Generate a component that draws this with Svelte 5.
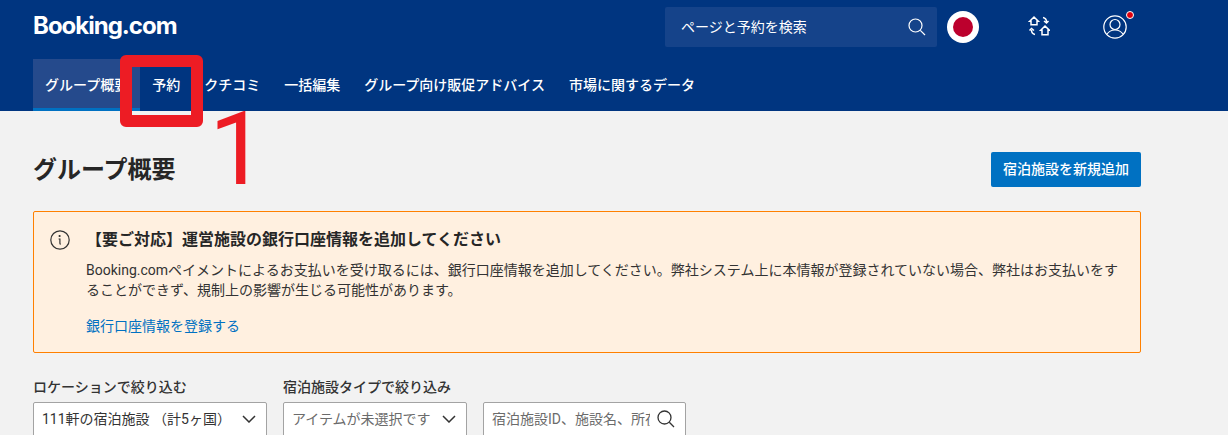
<script>
  const nav = ["グループ概要", "予約", "クチコミ", "一括編集", "グループ向け販促アドバイス", "市場に関するデータ"];
</script>

<div class="page">
  <header>
    <div class="top">
      <span class="logo">Booking.com</span>
      <div class="search">
        <span>ページと予約を検索</span>
        <svg width="18" height="18" viewBox="0 0 18 18" fill="none" stroke="#fff" stroke-width="1.2"><circle cx="7.5" cy="7.5" r="6.5" /><path d="M12.3 12.3 17 17" /></svg>
      </div>
      <div class="flag"><i></i></div>
      <svg class="switch" width="22" height="22" viewBox="0 0 22 22" fill="none" stroke="#fff" stroke-width="1.5">
        <path d="M1.7 6.2 6 2l4.3 4.2H9v3.6H3V6.2Z" />
        <path d="M12.7 15.2 17 11l4.3 4.2H20v4.6h-6v-4.6Z" />
        <path d="M15 2.5c2.5.5 3.5 2 3.500 4.500M16 6l2.500 2 2-2" />
        <path d="M7 19.500C4.500 19 3.500 17.500 3.500 15M1.500 15.500l2-2 2.500 2" />
      </svg>
      <div class="user">
        <svg width="24" height="24" viewBox="0 0 24 24" fill="none" stroke="#fff" stroke-width="1.2"><circle cx="12" cy="12" r="11.2" /><circle cx="12" cy="9.5" r="5" /><path d="M3.8 19.500C6 16 9 15 12 15s6 1 8.200 4.500" /></svg>
        <i class="dot"></i>
      </div>
    </div>
    <nav>
      {#each nav as item, i}
        <a class:active={i === 0}>{item}</a>
      {/each}
    </nav>
  </header>

  <main>
    <div class="heading">
      <h1>グループ概要</h1>
      <button class="add">宿泊施設を新規追加</button>
    </div>

    <section class="alert">
      <svg class="info" width="20" height="20" viewBox="0 0 20 20" fill="none" stroke="#333" stroke-width="1.2">
        <circle cx="10" cy="10" r="9.2" />
        <path d="M8.6 9h1.300v4.200c0 .6.300.9.900.9" />
        <circle cx="9.6" cy="6" r=".5" fill="#333" />
      </svg>
      <div class="alert-body">
        <h2>【要ご対応】運営施設の銀行口座情報を追加してください</h2>
        <p>Booking.comペイメントによるお支払いを受け取るには、銀行口座情報を追加してください。弊社システム上に本情報が登録されていない場合、弊社はお支払いをすることができず、規制上の影響が生じる可能性があります。</p>
        <a class="link">銀行口座情報を登録する</a>
      </div>
    </section>

    <div class="filters">
      <div class="field loc">
        <label>ロケーションで絞り込む</label>
        <div class="box">
          <span>111軒の宿泊施設 （計5ヶ国）</span>
          <svg width="14" height="8" viewBox="0 0 14 8" fill="none" stroke="#333" stroke-width="1.5"><path d="M1 1l6 6 6-6" /></svg>
        </div>
      </div>
      <div class="field type">
        <label>宿泊施設タイプで絞り込み</label>
        <div class="box muted">
          <span>アイテムが未選択です</span>
          <svg width="14" height="8" viewBox="0 0 14 8" fill="none" stroke="#333" stroke-width="1.5"><path d="M1 1l6 6 6-6" /></svg>
        </div>
      </div>
      <div class="field find">
        <div class="box muted">
          <span class="clip">宿泊施設ID、施設名、所在地</span>
          <svg width="18" height="18" viewBox="0 0 18 18" fill="none" stroke="#333" stroke-width="1.3"><circle cx="7.5" cy="7.5" r="6.5" /><path d="M12.3 12.3 17 17" /></svg>
        </div>
      </div>
    </div>
  </main>

  <div class="mark"></div>
  <div class="num">1</div>
</div>

<style>
  :global(body) {
    margin: 0;
    background: #f2f2f2;
  }
  .page {
    position: relative;
    width: 1228px;
    height: 435px;
    overflow: hidden;
    background: #f2f2f2;
    color: #333;
    font-family: Roboto, "Noto Sans CJK JP", sans-serif;
    font-size: 14px;
  }
  header {
    height: 111px;
    background: #003580;
    padding-left: 33px;
    box-sizing: border-box;
  }
  .top {
    height: 59px;
    display: flex;
    align-items: flex-start;
  }
  .logo {
    font-family: Inter, sans-serif;
    font-weight: 700;
    font-size: 24px;
    line-height: 26px;
    margin-top: 13px;
    letter-spacing: -1px;
    color: #fff;
    width: 632px;
  }
  .search {
    width: 272px;
    height: 40px;
    margin-top: 7px;
    padding: 0 11px 0 16px;
    box-sizing: border-box;
    background: #15438a;
    border-radius: 2px;
    display: flex;
    align-items: center;
    justify-content: space-between;
    color: #fff;
  }
  .search span {
    padding-bottom: 2px;
  }
  .flag {
    width: 32px;
    height: 32px;
    margin: 11px 0 0 10px;
    border-radius: 50%;
    background: #fff;
    display: flex;
    align-items: center;
    justify-content: center;
  }
  .flag i {
    width: 20px;
    height: 20px;
    border-radius: 50%;
    background: #bc002d;
  }
  .switch {
    margin: 15px 0 0 49px;
  }
  .user {
    position: relative;
    width: 24px;
    height: 24px;
    margin: 15px 0 0 53px;
  }
  .dot {
    position: absolute;
    top: -4px;
    right: -7px;
    width: 6px;
    height: 6px;
    border-radius: 50%;
    background: #e0000d;
    border: 1px solid #fff;
  }
  nav {
    display: flex;
    height: 52px;
  }
  nav a {
    padding: 0 12px;
    line-height: 53px;
    color: #fff;
    font-weight: 500;
  }
  nav a.active {
    background: #254a8c;
    box-shadow: inset 0 -3px 0 #0071c2;
  }
  main {
    padding: 40px 87px 0 33px;
  }
  .heading {
    display: flex;
    justify-content: space-between;
    align-items: flex-start;
    height: 37px;
  }
  h1 {
    margin: 1px 0 0;
    font-size: 24px;
    font-weight: 700;
    line-height: 36px;
    color: #262626;
  }
  .add {
    width: 150px;
    height: 35px;
    margin-top: 1px;
    border: 0;
    border-radius: 2px;
    background: #0071c2;
    color: #fff;
    font: 500 14px Roboto, "Noto Sans CJK JP", sans-serif;
    padding: 0 0 4px;
  }
  .alert {
    margin-top: 23px;
    height: 142px;
    box-sizing: border-box;
    border: 1px solid #ff8000;
    border-radius: 2px;
    background: #fff0e0;
    padding: 17px 20px 0 16px;
    display: flex;
    gap: 16px;
  }
  .info {
    margin-top: 1px;
    flex: none;
  }
  .alert-body {
    flex: 1;
  }
  h2 {
    margin: 0 0 9px;
    font-size: 16px;
    font-weight: 700;
    line-height: 22px;
    color: #262626;
  }
  .alert p {
    margin: 0 0 16px;
    line-height: 20px;
  }
  .link {
    color: #0071c2;
    line-height: 21px;
  }
  .filters {
    margin-top: 24px;
    display: flex;
    align-items: flex-end;
  }
  label {
    display: block;
    line-height: 20px;
    margin-bottom: 5px;
    font-weight: 500;
  }
  .box {
    height: 44px;
    box-sizing: border-box;
    border: 1px solid #a3a3a3;
    border-radius: 2px;
    background: #fff;
    padding: 0 10px 10px 8px;
    display: flex;
    align-items: center;
    justify-content: space-between;
    white-space: nowrap;
  }
  .box span {
    padding-bottom: 2px;
  }
  .muted {
    color: #6b6b6b;
  }
  .loc {
    width: 234px;
    margin-right: 16px;
  }
  .type {
    width: 184px;
    margin-right: 16px;
  }
  .find {
    width: 203px;
  }
  .clip {
    width: 158px;
    overflow: hidden;
  }
  .mark {
    position: absolute;
    left: 120px;
    top: 55px;
    width: 83px;
    height: 72px;
    box-sizing: border-box;
    border: 12px solid #ed1c24;
    border-radius: 6px;
  }
  .num {
    position: absolute;
    left: 209px;
    top: 94px;
    font-family: Roboto, sans-serif;
    font-size: 102px;
    line-height: 110px;
    color: #ed1c24;
  }
</style>
